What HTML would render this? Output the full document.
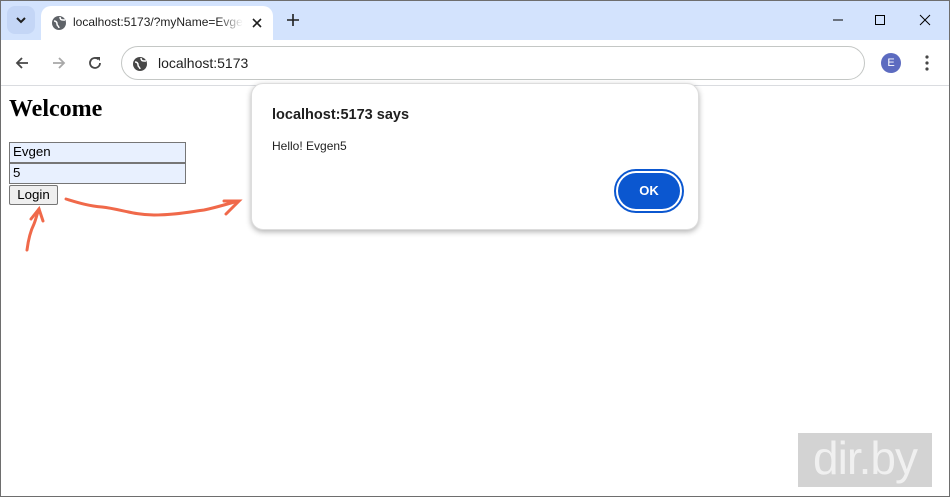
<!DOCTYPE html>
<html><head><meta charset="utf-8"><style>
*{box-sizing:border-box;margin:0;padding:0}
body{width:950px;height:497px;overflow:hidden;background:#fff;position:relative;font-family:"Liberation Sans",sans-serif}
.frame{position:absolute;inset:0;border:1px solid #6e6e6e;pointer-events:none;z-index:10}
.titlebar{position:absolute;left:0;top:0;width:950px;height:40px;background:#d3e3fd}
.tabbtn{position:absolute;left:7px;top:6px;width:28px;height:28px;border-radius:8px;background:#c4d6f6}
.tab{position:absolute;left:41px;top:6px;width:232px;height:34px;background:#fff;border-radius:10px 10px 0 0}
.tab .t{position:absolute;left:32px;top:9px;font-size:12px;color:#1f1f1f;white-space:nowrap;width:170px;overflow:hidden;-webkit-mask-image:linear-gradient(90deg,#000 85%,transparent);mask-image:linear-gradient(90deg,#000 85%,transparent)}
.toolbar{position:absolute;left:0;top:40px;width:950px;height:46px;background:#fff;border-bottom:1px solid #dadce0}
.omni{position:absolute;left:121px;top:6px;width:744px;height:34px;border:1px solid #c4c7c5;border-radius:17px;background:#fff}
.omni .u{position:absolute;left:36px;top:8px;font-size:14px;color:#1f1f1f}
h1{position:absolute;left:9px;top:96px;font-family:"Liberation Serif",serif;font-size:24px;font-weight:bold}
.inp{position:absolute;left:9px;width:177px;height:21px;background:#e8f0fe;border:1px solid #767676;font-size:13.3px;padding:1px 3px;color:#000}
.btn{position:absolute;left:9px;top:185px;width:49px;height:20px;background:#efefef;border:1px solid #767676;border-radius:2px;font-size:13.3px;text-align:center;line-height:18px}
.dlg{position:absolute;left:251px;top:83px;width:448px;height:147px;background:#fff;border:1px solid #ddd;border-radius:12px;box-shadow:0 2px 6px rgba(0,0,0,.3)}
.dlg .h{position:absolute;left:20px;top:23px;font-family:"Liberation Sans",sans-serif;font-size:14.5px;font-weight:bold;color:#1f1f1f}
.dlg .m{position:absolute;left:20px;top:55px;font-family:"Liberation Sans",sans-serif;font-size:12px;color:#1f1f1f}
.ok{position:absolute;left:362px;top:85px;width:70px;height:44px;border-radius:22px;border:2px solid #0b57d0;padding:2px}
.ok div{width:100%;height:100%;border-radius:18px;background:#0b57d0;color:#fff;font-weight:bold;font-size:13px;text-align:center;line-height:36px}
.wm{position:absolute;left:798px;top:433px;width:134px;height:54px;background:#d3d3d3;color:#f0f0f0;font-size:46px;line-height:50px;text-align:center;letter-spacing:-1px}
</style></head><body>
<div class="titlebar">
 <div class="tabbtn"><svg width="28" height="28"><path d="M10 12l4 4 4-4" stroke="#1f1f1f" stroke-width="2" fill="none"/></svg></div>
 <div class="tab">
  <svg style="position:absolute;left:10px;top:9px" width="16" height="16"><circle cx="8" cy="8" r="7" fill="#5f6368"/><path d="M3 6c2 0 3 1 3 3s2 2 2 4M9 2c0 2 1 3 3 3h2" stroke="#fff" stroke-width="1.5" fill="none"/></svg>
  <div class="t">localhost:5173/?myName=Evgen</div>
  <svg style="position:absolute;left:210px;top:11px" width="12" height="12"><path d="M2 2l8 8M10 2l-8 8" stroke="#1f1f1f" stroke-width="1.6"/></svg>
 </div>
 <svg style="position:absolute;left:286px;top:13px" width="14" height="14"><path d="M7 1v12M1 7h12" stroke="#1f1f1f" stroke-width="1.6"/></svg>
 <svg style="position:absolute;left:832px;top:14px" width="12" height="12"><path d="M1 6h10" stroke="#000"/></svg>
 <svg style="position:absolute;left:874px;top:14px" width="12" height="12"><rect x="1.5" y="1.5" width="9" height="9" stroke="#000" fill="none"/></svg>
 <svg style="position:absolute;left:919px;top:14px" width="12" height="12"><path d="M1 1l10 10M11 1l-10 10" stroke="#000"/></svg>
</div>
<div class="toolbar">
 <svg style="position:absolute;left:14px;top:15px" width="16" height="16"><path d="M14 8H3M8 3L3 8l5 5" stroke="#474747" stroke-width="1.8" fill="none"/></svg>
 <svg style="position:absolute;left:51px;top:15px" width="16" height="16"><path d="M2 8h11M8 3l5 5-5 5" stroke="#a8a8a8" stroke-width="1.8" fill="none"/></svg>
 <svg style="position:absolute;left:87px;top:15px" width="16" height="16"><path d="M13 8a5 5 0 1 1-1.5-3.6" stroke="#474747" stroke-width="1.8" fill="none"/><path d="M9 2h4v4z" fill="#474747"/></svg>
 <div class="omni">
  <svg style="position:absolute;left:10px;top:9px" width="16" height="16"><circle cx="8" cy="8" r="7" fill="#474747"/><path d="M3 6c2 0 3 1 3 3s2 2 2 4M9 2c0 2 1 3 3 3h2" stroke="#fff" stroke-width="1.5" fill="none"/></svg>
  <div class="u">localhost:5173</div>
 </div>
 <div style="position:absolute;left:881px;top:13px;width:20px;height:20px;border-radius:50%;background:#5c6bc0;color:#fff;font-size:11px;text-align:center;line-height:20px">E</div>
 <svg style="position:absolute;left:923px;top:14px" width="8" height="18"><circle cx="4" cy="3" r="1.6" fill="#474747"/><circle cx="4" cy="9" r="1.6" fill="#474747"/><circle cx="4" cy="15" r="1.6" fill="#474747"/></svg>
</div>
<h1>Welcome</h1>
<div class="inp" style="top:142px">Evgen</div>
<div class="inp" style="top:163px">5</div>
<div class="btn">Login</div>
<svg style="position:absolute;left:0;top:0" width="250" height="260" fill="none" stroke="#f0694a" stroke-width="3" stroke-linecap="round">
 <path d="M27 250c1-8 3-18 7-26 2-5 3-10 5-15"/>
 <path d="M31 219l8-10 4 12"/>
 <path d="M66 199c10 3 22 7 36 8 18 2 32 8 52 8 20 0 35-3 50-5 10-2 20-5 34-9"/>
 <path d="M224 201l15 0-13 13"/>
</svg>
<div class="dlg">
 <div class="h">localhost:5173 says</div>
 <div class="m">Hello! Evgen5</div>
 <div class="ok"><div>OK</div></div>
</div>
<div class="wm">dir.by</div>
<div class="frame"></div>
</body></html>
